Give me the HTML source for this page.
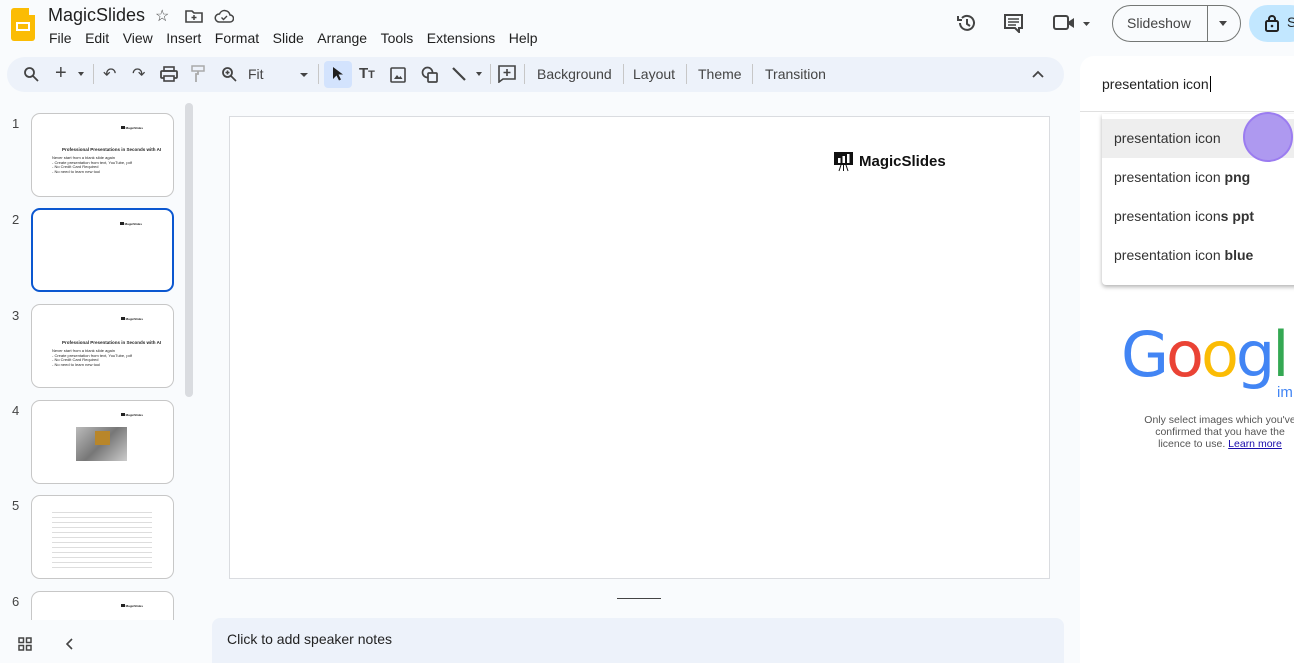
<!DOCTYPE html>
<html><head><meta charset="utf-8"><style>
*{box-sizing:border-box;margin:0;padding:0}
body{width:1294px;height:663px;overflow:hidden;background:#f9fbfd;font-family:"Liberation Sans",Arial,sans-serif;color:#1f1f1f;position:relative}
.abs{position:absolute}
.menu span{margin-right:13.5px;font-size:14px}
.tb{left:7px;top:57px;width:1057px;height:35px;background:#edf2fa;border-radius:18px}
.ti{position:absolute;top:66px;font-size:14px;color:#444}
.sep{position:absolute;top:64px;width:1px;height:20px;background:#c7c7c7}
.th{position:absolute;left:31px;width:143px;height:84px;background:#fff;border:1px solid #c7c7c7;border-radius:9px}
.num{position:absolute;left:12px;font-size:13px;color:#444}
.mini{position:absolute;right:30px;top:12px;font-size:3px;font-weight:bold}
.mini:before{content:"";display:inline-block;width:4px;height:3px;background:#222;margin-right:1px}
.sug{height:39px;line-height:39px;padding-left:12px;font-size:14px;color:#333}
</style></head><body>
<div class="abs" style="left:11px;top:8px;width:24px;height:33px;background:#fbbc04;border-radius:3px"></div>
<div class="abs" style="left:29px;top:8px;width:6px;height:7px;background:#f9fbfd"></div>
<div class="abs" style="left:16px;top:22px;width:14px;height:9px;border:2px solid #fff"></div>
<div class="abs" style="left:48px;top:5px;font-size:18px">MagicSlides</div>
<div class="abs" style="left:155px;top:6px;font-size:16px;color:#444">☆</div>
<svg class="abs" style="left:185px;top:9px" width="18" height="14"><path d="M1 2h6l2 2h8v9H1z" fill="none" stroke="#444" stroke-width="1.6"/><path d="M9 6v5M6.5 8.5h5" stroke="#444" stroke-width="1.5"/></svg>
<svg class="abs" style="left:214px;top:9px" width="20" height="14"><path d="M5 13h11a3.5 3.5 0 0 0 0-7 5.5 5.5 0 0 0-10.5-1A4 4 0 0 0 5 13z" fill="none" stroke="#444" stroke-width="1.5"/><path d="M7.5 8.5l2 2 3.5-3.5" fill="none" stroke="#444" stroke-width="1.4"/></svg>
<div class="abs menu" style="left:49px;top:30px;white-space:nowrap"><span>File</span><span>Edit</span><span>View</span><span>Insert</span><span>Format</span><span>Slide</span><span>Arrange</span><span>Tools</span><span>Extensions</span><span>Help</span></div>
<svg class="abs" style="left:956px;top:12px" width="22" height="22"><path d="M4 11a7 7 0 1 0 2-5" fill="none" stroke="#444" stroke-width="2"/><path d="M2 4v4h4" fill="none" stroke="#444" stroke-width="2"/><path d="M11 7v5l3 2" fill="none" stroke="#444" stroke-width="2"/></svg>
<svg class="abs" style="left:1003px;top:13px" width="22" height="20"><path d="M2 2h17v13h-3v4l-4-4H2z" fill="none" stroke="#444" stroke-width="2"/><path d="M5 6h11M5 9h11M5 12h8" stroke="#444" stroke-width="1.5"/></svg>
<svg class="abs" style="left:1053px;top:14px" width="40" height="18"><rect x="1" y="2" width="14" height="13" rx="2" fill="none" stroke="#444" stroke-width="2"/><path d="M15 8l6-4v10l-6-4z" fill="#444"/><path d="M30 8h7l-3.5 4z" fill="#444"/></svg>
<div class="abs" style="left:1112px;top:5px;width:129px;height:37px;border:1px solid #747775;border-radius:19px"></div>
<div class="abs" style="left:1127px;top:15px;font-size:14px;color:#444">Slideshow</div>
<div class="abs" style="left:1207px;top:6px;width:1px;height:35px;background:#747775"></div>
<div class="abs" style="left:1219px;top:21px;border:4px solid transparent;border-top:5px solid #444"></div>
<div class="abs" style="left:1249px;top:5px;width:60px;height:37px;background:#c2e7ff;border-radius:19px"></div>
<svg class="abs" style="left:1265px;top:14px" width="14" height="18"><rect x="1" y="7" width="12" height="10" rx="1.5" fill="none" stroke="#222" stroke-width="2"/><path d="M4 7V5a3 3 0 0 1 6 0v2" fill="none" stroke="#222" stroke-width="2"/><circle cx="7" cy="12" r="1.3" fill="#222"/></svg>
<div class="abs" style="left:1287px;top:14px;font-size:14px">S</div>
<div class="abs tb"></div>
<svg class="abs" style="left:23px;top:66px" width="16" height="16"><circle cx="6.5" cy="6.5" r="4.5" fill="none" stroke="#444" stroke-width="1.8"/><path d="M10 10l5 5" stroke="#444" stroke-width="1.8"/></svg>
<div class="ti" style="left:55px;top:62px;font-size:20px">+</div>
<div class="abs" style="left:78px;top:72px;border:3px solid transparent;border-top:4px solid #444"></div>
<div class="sep" style="left:93px"></div>
<div class="ti" style="left:103px;top:64px;font-size:16px">↶</div>
<div class="ti" style="left:132px;top:64px;font-size:16px">↷</div>
<svg class="abs" style="left:160px;top:66px" width="18" height="16"><rect x="4" y="1" width="10" height="4" fill="none" stroke="#444" stroke-width="1.6"/><rect x="1" y="5" width="16" height="7" rx="1" fill="none" stroke="#444" stroke-width="1.8"/><rect x="4" y="10" width="10" height="5" fill="#edf2fa" stroke="#444" stroke-width="1.6"/></svg>
<svg class="abs" style="left:191px;top:65px" width="14" height="18"><rect x="1" y="1" width="12" height="5" fill="none" stroke="#aaa" stroke-width="1.5"/><path d="M7 6v3h-2v8" fill="none" stroke="#aaa" stroke-width="1.8"/></svg>
<svg class="abs" style="left:221px;top:66px" width="16" height="16"><circle cx="6.5" cy="6.5" r="4.5" fill="none" stroke="#444" stroke-width="1.8"/><path d="M10 10l5 5M4.5 6.5h4M6.5 4.5v4" stroke="#444" stroke-width="1.6"/></svg>
<div class="ti" style="left:248px">Fit</div>
<div class="abs" style="left:300px;top:73px;border:4px solid transparent;border-top:4px solid #444"></div>
<div class="sep" style="left:318px"></div>
<div class="abs" style="left:324px;top:61px;width:28px;height:27px;background:#d3e3fd;border-radius:4px"></div>
<svg class="abs" style="left:332px;top:66px" width="12" height="16"><path d="M1 1v12l3.5-3.5 2.5 5 2-1-2.5-5H11z" fill="#1f1f1f"/></svg>
<div class="ti" style="left:359px;top:65px;font-weight:bold;font-size:15px">T<span style="font-size:11px">T</span></div>
<svg class="abs" style="left:390px;top:67px" width="16" height="16"><rect x="1" y="1" width="14" height="14" rx="1" fill="none" stroke="#444" stroke-width="1.6"/><path d="M4 12l3-4 2 2.5 1.5-1.5 2 3z" fill="#444"/></svg>
<svg class="abs" style="left:421px;top:66px" width="18" height="18"><circle cx="6.5" cy="6.5" r="5" fill="none" stroke="#444" stroke-width="1.7"/><rect x="7" y="7" width="9" height="9" rx="1" fill="#edf2fa" stroke="#444" stroke-width="1.7"/></svg>
<svg class="abs" style="left:451px;top:66px" width="16" height="16"><path d="M2 2l12 12" stroke="#444" stroke-width="2.2"/></svg>
<div class="abs" style="left:476px;top:72px;border:3px solid transparent;border-top:4px solid #444"></div>
<div class="sep" style="left:490px"></div>
<svg class="abs" style="left:498px;top:65px" width="18" height="18"><path d="M1 1h16v13H5l-4 3z" fill="none" stroke="#444" stroke-width="1.6"/><path d="M9 4v7M5.5 7.5h7" stroke="#444" stroke-width="1.6"/></svg>
<div class="sep" style="left:524px"></div>
<div class="ti" style="left:537px">Background</div>
<div class="sep" style="left:623px"></div>
<div class="ti" style="left:633px">Layout</div>
<div class="sep" style="left:686px"></div>
<div class="ti" style="left:698px">Theme</div>
<div class="sep" style="left:752px"></div>
<div class="ti" style="left:765px">Transition</div>
<svg class="abs" style="left:1032px;top:70px" width="12" height="8"><path d="M1 7l5-5 5 5" fill="none" stroke="#444" stroke-width="1.8"/></svg>
<div class="num" style="top:116px">1</div>
<div class="th" style="top:113px"><div class="mini">MagicSlides</div><div style="position:absolute;left:30px;top:33px;font-size:4.5px;font-weight:bold">Professional Presentations in Seconds with AI</div><div style="position:absolute;left:20px;top:42px;font-size:4px;line-height:4.5px">Never start from a blank slide again<br>- Create presentation from text, YouTube, pdf<br>- No Credit Card Required<br>- No need to learn new tool</div></div>
<div class="num" style="top:212px">2</div>
<div class="th" style="top:208px;border:2.5px solid #0b57d0"><div class="mini">MagicSlides</div></div>
<div class="num" style="top:308px">3</div>
<div class="th" style="top:304px"><div class="mini">MagicSlides</div><div style="position:absolute;left:30px;top:35px;font-size:4.5px;font-weight:bold">Professional Presentations in Seconds with AI</div><div style="position:absolute;left:20px;top:44px;font-size:4px;line-height:4.5px">Never start from a blank slide again<br>- Create presentation from text, YouTube, pdf<br>- No Credit Card Required<br>- No need to learn new tool</div></div>
<div class="num" style="top:403px">4</div>
<div class="th" style="top:400px"><div class="mini">MagicSlides</div><div style="position:absolute;left:44px;top:26px;width:51px;height:34px;background:linear-gradient(135deg,#bbb,#777 50%,#ccc)"><div style="position:absolute;left:19px;top:4px;width:15px;height:14px;background:#b8862a"></div></div></div>
<div class="num" style="top:498px">5</div>
<div class="th" style="top:495px"><div class="mini">MagicSlides</div><div style="position:absolute;left:20px;top:12px;width:100px;height:60px;background:repeating-linear-gradient(#fff 0 4px,#ddd 4px 5px)"></div></div>
<div class="num" style="top:594px">6</div>
<div class="th" style="top:591px;height:40px;border-bottom:none;border-radius:9px 9px 0 0"><div class="mini">MagicSlides</div></div>
<div class="abs" style="left:0;top:620px;width:200px;height:43px;background:#f9fbfd"></div>
<div class="abs" style="left:185px;top:103px;width:8px;height:294px;background:#dadce0;border-radius:4px"></div>
<svg class="abs" style="left:18px;top:637px" width="14" height="14"><g fill="none" stroke="#444" stroke-width="1.5"><rect x="1" y="1" width="4.5" height="4.5"/><rect x="8.5" y="1" width="4.5" height="4.5"/><rect x="1" y="8.5" width="4.5" height="4.5"/><rect x="8.5" y="8.5" width="4.5" height="4.5"/></g></svg>
<svg class="abs" style="left:66px;top:638px" width="8" height="12"><path d="M6 1L1 6l5 5" fill="none" stroke="#444" stroke-width="1.6"/></svg>
<div class="abs" style="left:229px;top:116px;width:821px;height:463px;background:#fff;border:1px solid #dadce0"></div>
<svg class="abs" style="left:834px;top:152px" width="20" height="20"><rect x="0" y="0" width="19" height="13" fill="#111"/><rect x="4" y="6" width="2.5" height="5" fill="#fff"/><rect x="8.5" y="4" width="2.5" height="7" fill="#fff"/><rect x="13" y="2" width="2.5" height="9" fill="#fff"/><path d="M7 13l-2 6M9.5 13v6M12 13l2 6" stroke="#111" stroke-width="1"/></svg>
<div class="abs" style="left:859px;top:153px;font-size:15px;font-weight:bold;color:#111">MagicSlides</div>
<div class="abs" style="left:617px;top:598px;width:44px;height:1px;background:#444"></div>
<div class="abs" style="left:212px;top:618px;width:852px;height:45px;background:#edf2fa;border-radius:8px 8px 0 0"></div>
<div class="abs" style="left:227px;top:631px;font-size:14px;color:#222">Click to add speaker notes</div>
<div class="abs" style="left:1080px;top:56px;width:220px;height:607px;background:#fff;border-radius:14px 0 0 0"></div>
<div class="abs" style="left:1080px;top:111px;width:214px;height:1px;background:#e0e0e0"></div>
<div class="abs" style="left:1102px;top:76px;font-size:14px;color:#222">presentation icon<span style="border-left:1px solid #000;margin-left:1px"></span></div>
<div class="abs" style="left:1102px;top:114px;width:200px;height:171px;background:#fff;border-radius:0 0 4px 4px;box-shadow:0 2px 4px rgba(0,0,0,.3)">
<div style="height:5px"></div>
<div class="sug" style="background:#eee">presentation icon</div>
<div class="sug">presentation icon <b>png</b></div>
<div class="sug">presentation icon<b>s ppt</b></div>
<div class="sug">presentation icon <b>blue</b></div>
</div>
<div class="abs" style="left:1243px;top:112px;width:50px;height:50px;border-radius:50%;background:#ae99f0;border:2px solid #9b7cf0"></div>
<div class="abs" style="left:1121px;top:318px;font-family:'DejaVu Sans',sans-serif;font-size:62px;letter-spacing:-3px;white-space:nowrap"><span style="color:#4285f4">G</span><span style="color:#ea4335">o</span><span style="color:#fbbc05">o</span><span style="color:#4285f4">g</span><span style="color:#34a853">l</span></div>
<div class="abs" style="left:1277px;top:384px;font-size:15px;color:#4285f4">im</div>
<div class="abs" style="left:1140px;top:414px;width:160px;font-size:10.5px;line-height:12px;color:#555;text-align:center">Only select images which you've confirmed that you have the licence to use. <u style="color:#1a0dab">Learn more</u></div>
</body></html>
